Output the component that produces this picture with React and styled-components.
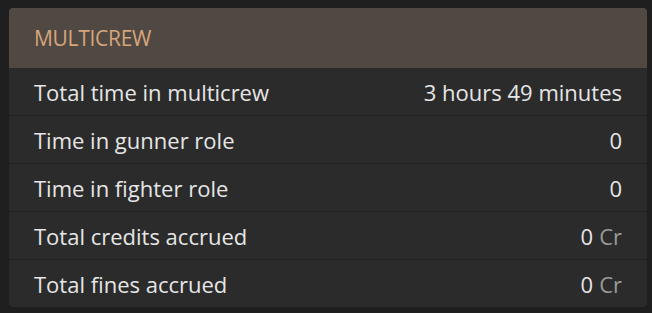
import React from "react";
import styled, { createGlobalStyle } from "styled-components";

const Global = createGlobalStyle`
  html, body { margin: 0; padding: 0; background: #1f1f1f; }
  body { font-family: "Open Sans", "Noto Sans", sans-serif; }
`;

const Page = styled.div`
  padding: 8px 5px 6px 9px;
`;

const Card = styled.section`
  background: #2b2b2b;
  border-radius: 4px;
  overflow: hidden;
  width: 638px;
`;

const Header = styled.header`
  height: 60px;
  display: flex;
  align-items: center;
  padding: 0 25px;
  background: #504843;
  color: #d6a57a;
  font-size: 21px;
  letter-spacing: -0.3px;
`;

const Row = styled.div`
  height: 47px;
  display: flex;
  align-items: center;
  justify-content: space-between;
  padding: 0 25px;
  color: #e6e6e6;
  font-size: 22px;
  & + & { border-top: 1px solid #212121; }
`;

const Label = styled.span``;
const Value = styled.span``;
const Unit = styled.span`
  color: #9a9a9a;
  margin-left: 6px;
`;

const rows = [
  ["Total time in multicrew", "3 hours 49 minutes"],
  ["Time in gunner role", "0"],
  ["Time in fighter role", "0"],
  ["Total credits accrued", "0", "Cr"],
  ["Total fines accrued", "0", "Cr"],
];

export default function App() {
  return (
    <Page>
      <Global />
      <Card>
        <Header>MULTICREW</Header>
        {rows.map(([l, v, u]) => (
          <Row key={l}>
            <Label>{l}</Label>
            <Value>
              {v}
              {u && <Unit>{u}</Unit>}
            </Value>
          </Row>
        ))}
      </Card>
    </Page>
  );
}
